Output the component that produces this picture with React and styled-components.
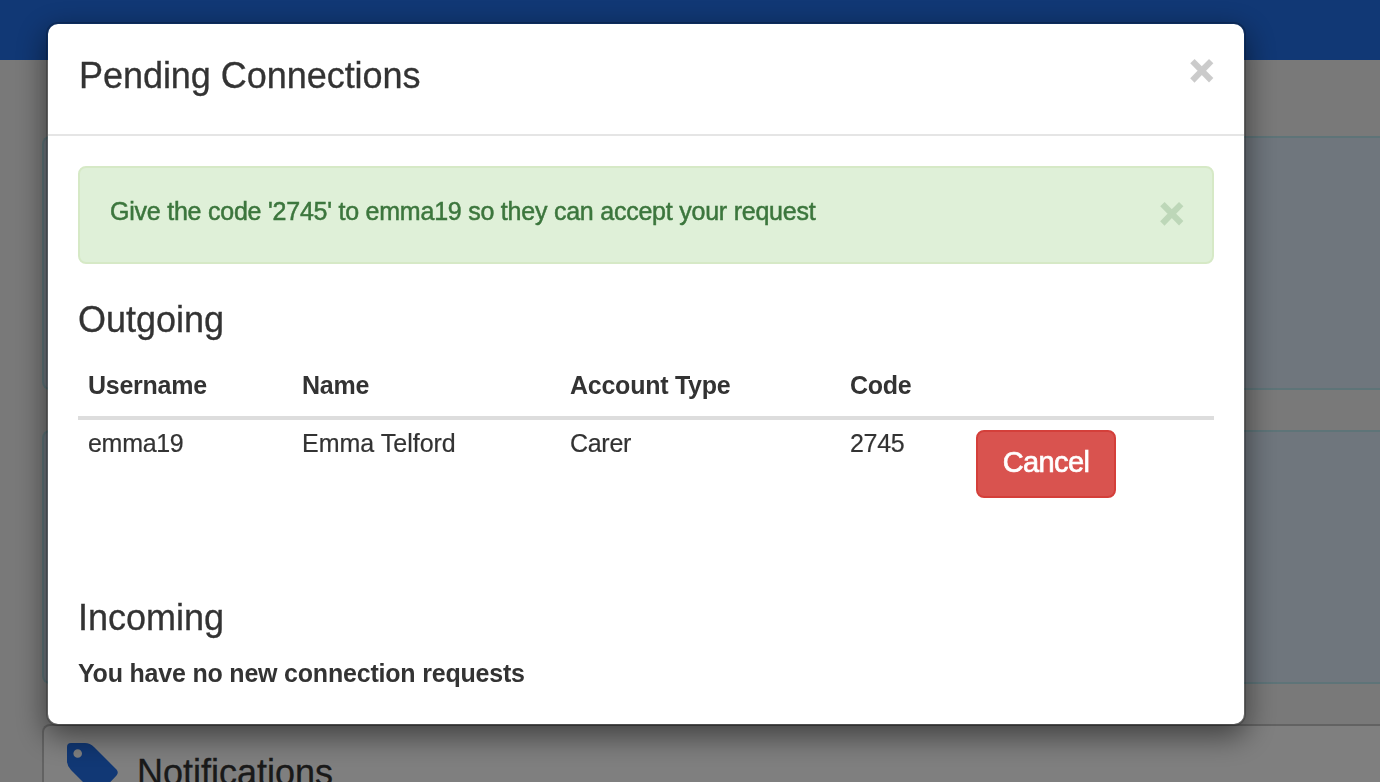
import React from "react";
import styled, { createGlobalStyle } from "styled-components";

const GlobalStyle = createGlobalStyle`
  * { box-sizing: border-box; }
  html, body { margin: 0; height: 100%; overflow: hidden; }
  body {
    font-family: "Liberation Sans", Helvetica, Arial, sans-serif;
    font-size: 25px;
    line-height: 36px;
    color: #333;
    background: #f2f2f2;
  }
`;

const Page = styled.div`
  height: 782px;
  overflow: hidden;
`;

const NavBar = styled.header`
  height: 60px;
  background: #2270ea;
`;

const Content = styled.main`
  display: flex;
  flex-direction: column;
  gap: 40px;
  padding-top: 76px;
  margin-left: 42px;
`;

const Well = styled.section`
  height: 254px;
  background: #deecfb;
  border: 2px solid #bce8f1;
  border-right: 0;
  border-radius: 8px 0 0 8px;
`;

const Panel = styled.section`
  display: flex;
  align-items: flex-start;
  gap: 18px;
  height: 200px;
  padding: 17px 0 0 23px;
  background: #fff;
  border: 2px solid #c4c4c4;
  border-right: 0;
  border-radius: 8px 0 0 0;
`;

const PanelTitle = styled.h3`
  margin: 10px 0 0;
  font-size: 36px;
  font-weight: 400;
  line-height: 40px;
  -webkit-text-stroke: 0.3px currentColor;
`;

const Backdrop = styled.div`
  position: fixed;
  inset: 0;
  padding: 22px 0 0 46px;
  background: rgba(0, 0, 0, 0.5);
`;

const Dialog = styled.div`
  width: 1200px;
  height: 704px;
  background: #fff;
  background-clip: padding-box;
  border: 2px solid rgba(0, 0, 0, 0.2);
  border-radius: 12px;
  box-shadow: 0 10px 30px rgba(0, 0, 0, 0.5);
`;

const DialogHeader = styled.div`
  display: flex;
  justify-content: space-between;
  height: 112px;
  padding: 30px 30px 30px 31px;
  border-bottom: 2px solid #e5e5e5;
`;

const Title = styled.h4`
  margin: 0;
  font-size: 36px;
  font-weight: 400;
  line-height: 44px;
  letter-spacing: -0.04px;
  -webkit-text-stroke: 0.3px currentColor;
`;

const Close = styled.button`
  height: 42px;
  padding: 0;
  margin-top: ${(p) => p.$drop || 0}px;
  border: 0;
  background: none;
  font: bold 42px/42px "Liberation Sans", Arial, sans-serif;
  color: ${(p) => p.$color || "#000"};
  -webkit-text-stroke: 1.6px currentColor;
  opacity: 0.2;
`;

const DialogBody = styled.div`
  padding: 30px;
`;

const Alert = styled.div`
  display: flex;
  justify-content: space-between;
  height: 98px;
  padding: 25px 28px 0 30px;
  color: #3c763d;
  background: #dff0d8;
  border: 2px solid #d6e9c6;
  border-radius: 8px;
`;

const AlertText = styled.span`
  line-height: 36px;
  letter-spacing: -0.23px;
  -webkit-text-stroke: 0.5px currentColor;
`;

const SectionTitle = styled.h4`
  margin: ${(p) => p.$top}px 0 0;
  font-size: 36px;
  font-weight: 400;
  line-height: 40px;
  -webkit-text-stroke: 0.3px currentColor;
`;

const Table = styled.table`
  width: 1136px;
  margin-top: 14px;
  table-layout: fixed;
  border-collapse: collapse;
`;

const HeadCell = styled.th`
  width: ${(p) => p.$width}px;
  height: 64px;
  padding: 0 10px 13px;
  text-align: left;
  vertical-align: bottom;
  letter-spacing: -0.25px;
  border-bottom: 4px solid #ddd;
`;

const Cell = styled.td`
  height: 144px;
  padding: ${(p) => (p.$action ? 10 : 5)}px 10px 0;
  vertical-align: top;
  letter-spacing: ${(p) => (p.$wide ? 0 : -0.3)}px;
  -webkit-text-stroke: 0.2px currentColor;
`;

const CancelButton = styled.button`
  display: block;
  width: 140px;
  height: 68px;
  padding: 0 0 4px;
  font-family: inherit;
  font-size: 29px;
  letter-spacing: -0.6px;
  color: #fff;
  -webkit-text-stroke: 0.7px #fff;
  background: #d9534f;
  border: 2px solid #d43f3a;
  border-radius: 8px;
`;

const EmptyNote = styled.p`
  margin: 17px 0 0;
  font-weight: 700;
  letter-spacing: -0.2px;
`;

const columns = [
  ["Username", 214],
  ["Name", 268],
  ["Account Type", 280],
  ["Code", 126],
  ["", 248],
];

function TagIcon() {
  return (
    <svg width="52" height="52" viewBox="0 0 52 52" aria-hidden="true">
      <path
        fillRule="evenodd"
        fill="#2270ea"
        d="M4 0H18Q23 0 27 4L49.500 26.500Q52 29.500 49.500 32.500L33 50Q30 52.500 27 50L4 27Q0 23 0 18V4Q0 0 4 0ZM10.700 6.200A4.300 4.300 0 1 0 10.700 14.800A4.300 4.300 0 1 0 10.700 6.200Z"
      />
    </svg>
  );
}

export default function App() {
  return (
    <>
      <GlobalStyle />
      <Page>
        <NavBar />
        <Content>
          <Well />
          <Well />
          <Panel>
            <TagIcon />
            <PanelTitle>Notifications</PanelTitle>
          </Panel>
        </Content>
      </Page>
      <Backdrop>
        <Dialog role="dialog">
          <DialogHeader>
            <Title>Pending Connections</Title>
            <Close $drop={-4}>×</Close>
          </DialogHeader>
          <DialogBody>
            <Alert>
              <AlertText>Give the code '2745' to emma19 so they can accept your request</AlertText>
              <Close $color="#3c763d">×</Close>
            </Alert>
            <SectionTitle $top={36}>Outgoing</SectionTitle>
            <Table>
              <thead>
                <tr>
                  {columns.map(([label, width]) => (
                    <HeadCell key={width} $width={width}>{label}</HeadCell>
                  ))}
                </tr>
              </thead>
              <tbody>
                <tr>
                  <Cell>emma19</Cell>
                  <Cell $wide>Emma Telford</Cell>
                  <Cell>Carer</Cell>
                  <Cell>2745</Cell>
                  <Cell $action><CancelButton>Cancel</CancelButton></Cell>
                </tr>
              </tbody>
            </Table>
            <SectionTitle $top={36}>Incoming</SectionTitle>
            <EmptyNote>You have no new connection requests</EmptyNote>
          </DialogBody>
        </Dialog>
      </Backdrop>
    </>
  );
}
